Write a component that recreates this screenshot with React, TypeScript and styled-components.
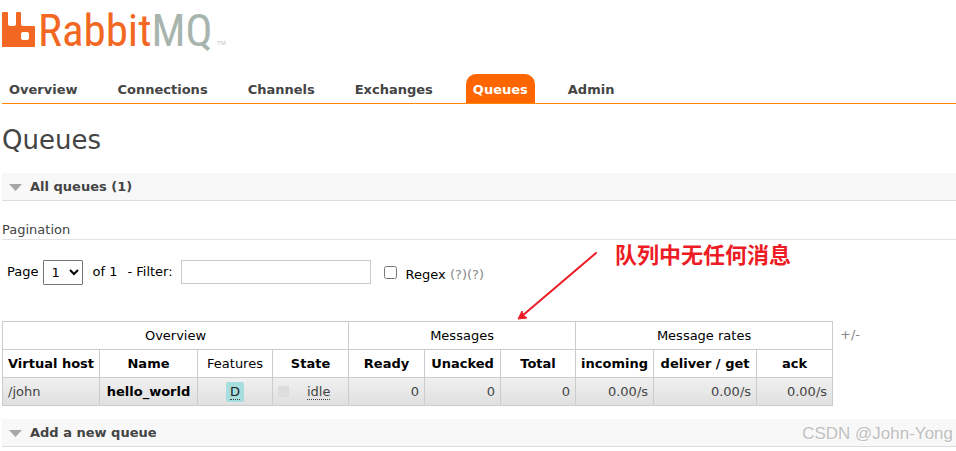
import React from "react";
import styled, { createGlobalStyle, css } from "styled-components";

const GlobalStyle = createGlobalStyle`
  * { box-sizing: border-box; }
  body {
    margin: 0;
    background: #fff;
    color: #444;
    font: 13px/16px Verdana, "DejaVu Sans", sans-serif;
  }
`;

const Page = styled.div`
  position: relative;
  padding: 0 0 4px 2px;
`;

const Logo = styled.a`
  display: block;
  height: 60px;
  svg { display: block; }
`;

const Wordmark = styled.text`
  font-family: "Roboto Condensed", Roboto, sans-serif;
  font-weight: 400;
  font-size: 45px;
`;

const Tabs = styled.nav`
  display: flex;
  gap: 26px;
  margin-top: 14px;
  border-bottom: 1px solid #f80;
`;

const Tab = styled.a<{ $active?: boolean }>`
  padding: 8px 7px 5px;
  border-radius: 10px 10px 0 0;
  font-weight: bold;
  text-decoration: none;
  white-space: nowrap;
  color: ${(p) => (p.$active ? "#fff" : "#444")};
  background: ${(p) => (p.$active ? "#f60" : "transparent")};
`;

const Title = styled.h1`
  margin: 20px 0 17px;
  font-size: 26px;
  line-height: 32px;
  font-weight: normal;
`;

const SectionHead = styled.h2`
  margin: 0;
  border-bottom: 1px solid #ddd;
  background: #f8f8f8;
`;

const Toggle = styled.button`
  display: flex;
  align-items: center;
  gap: 8px;
  width: 100%;
  padding: 6px 7px 5px;
  border: 0;
  background: none;
  color: #444;
  font: bold 13px/16px Verdana, "DejaVu Sans", sans-serif;
  text-align: left;
`;

const SubTitle = styled.h3`
  margin: 21px 0 0;
  padding-bottom: 1px;
  border-bottom: 1px solid #e4e4e4;
  font-size: 13px;
  font-weight: normal;
`;

const Filters = styled.form`
  display: flex;
  align-items: center;
  height: 26px;
  margin: 19px 0 36px 5px;
  color: #000;
`;

const Group = styled.div`
  display: flex;
  align-items: center;
`;

const PageSelect = styled.select`
  width: 40px;
  height: 25px;
  margin: 0 9px 0 5px;
  padding: 0 0 0 3px;
  border: 1px solid #767676;
  border-radius: 1px;
  background: #fff;
  color: #000;
  font: 13px/16px Verdana, "DejaVu Sans", sans-serif;
`;

const FilterLabel = styled.label`
  margin: 0 8px 0 10px;
`;

const FilterInput = styled.input`
  width: 190px;
  height: 24px;
  padding: 2px 4px;
  border: 1px solid #ccc;
  font: 13px/16px Verdana, "DejaVu Sans", sans-serif;
`;

const Check = styled.input`
  width: 13px;
  height: 13px;
  margin: 0 9px 0 13px;
`;

const RegexText = styled.div`
  padding-top: 6px;
`;

const Help = styled.a`
  color: #888;
  text-decoration: none;
`;

const TableRow = styled.div`
  display: flex;
  align-items: flex-start;
  gap: 7px;
  margin-bottom: 13px;
`;

const Table = styled.table`
  width: 831px;
  table-layout: fixed;
  border-collapse: collapse;
`;

const Col = styled.col<{ $w: number }>`
  width: ${(p) => p.$w}px;
`;

const cell = css`
  height: 28px;
  padding: 0 5px;
  border: 1px solid #ccc;
  white-space: nowrap;
`;

const Th = styled.th<{ $plain?: boolean }>`
  ${cell}
  padding: 0;
  color: #000;
  font-weight: ${(p) => (p.$plain ? "normal" : "bold")};
`;

const BodyRow = styled.tr`
  background: linear-gradient(#f0f0f0, #dfdfdf);
`;

const Td = styled.td<{ $align?: "left" | "center" | "right" }>`
  ${cell}
  text-align: ${(p) => p.$align ?? "left"};
`;

const QueueLink = styled.a`
  color: #000;
  font-weight: bold;
  text-decoration: none;
`;

const Abbr = styled.abbr`
  border-bottom: 1px dotted #444;
  text-decoration: none;
  line-height: 14px;
  display: inline-block;
`;

const Feature = styled.span`
  display: inline-block;
  padding: 3px 4px 2px;
  border-radius: 2px;
  background: #a6dedd;
  color: #222;
  line-height: 14px;
`;

const State = styled.div`
  display: flex;
  align-items: center;
`;

const StateBox = styled.span`
  width: 11px;
  height: 11px;
  background: #ddd;
`;

const StateText = styled.span`
  margin-left: 18px;
`;

const ColumnsLink = styled.a`
  margin-top: 6px;
  color: #888;
  text-decoration: none;
`;

const Arrow = styled.svg`
  position: absolute;
  left: 514px;
  top: 248px;
`;

const Note = styled.div`
  position: absolute;
  left: 615px;
  top: 239px;
  color: #ed1c24;
  font: bold 22px/28px "Noto Sans CJK SC", sans-serif;
  white-space: nowrap;
`;

const Watermark = styled.div`
  position: absolute;
  right: 3px;
  bottom: 7px;
  color: #c0c0c0;
  font: 17px/20px "Liberation Sans", Arial, sans-serif;
  text-shadow: 1px 1px 0 #fff;
  white-space: nowrap;
`;

const tabs = ["Overview", "Connections", "Channels", "Exchanges", "Queues", "Admin"];
const columns = [97, 98, 75, 76, 76, 76, 75, 78, 103, 76];

function Section({ children }: { children: React.ReactNode }) {
  return (
    <SectionHead>
      <Toggle type="button">
        <svg width="13" height="7" viewBox="0 0 13 7" aria-hidden="true">
          <path d="M0 0H13L6.5 7Z" fill="#a6a6a6" />
        </svg>
        {children}
      </Toggle>
    </SectionHead>
  );
}

export default function App() {
  return (
    <>
      <GlobalStyle />
      <Page>
        <header>
          <Logo href="#/" aria-label="RabbitMQ">
            <svg width="228" height="60" viewBox="0 -8 228 60">
              <path
                fill="#f26822"
                fillRule="evenodd"
                d="M1 4H5Q6 4 6 5V16Q6 18 8 18H12Q14 18 14 16V5Q14 4 15 4H18Q19 4 19 5V16Q19 18 21 18H32Q33 18 33 19V38Q33 39 32 39H0V5Q0 4 1 4ZM21 24Q19 24 19 26V30Q19 32 21 32H25Q27 32 27 30V26Q27 24 25 24Z"
              />
              <Wordmark x="36" y="38" fill="#f26822">
                Rabbit<tspan fill="#a8b5ae">MQ</tspan>
              </Wordmark>
              <text x="215" y="37" fill="#bbc4bf" fontFamily="Liberation Sans" fontSize="6">TM</text>
            </svg>
          </Logo>
          <Tabs>
            {tabs.map((t) => (
              <Tab key={t} href={"#/" + t.toLowerCase()} $active={t === "Queues"}>{t}</Tab>
            ))}
          </Tabs>
        </header>
        <main>
          <Title>Queues</Title>
          <Section>All queues (1)</Section>
          <SubTitle>Pagination</SubTitle>
          <Filters>
            <Group>
              <label htmlFor="page">Page</label>
              <PageSelect id="page" defaultValue="1">
                <option>1</option>
              </PageSelect>
              of 1
            </Group>
            <Group>
              <FilterLabel htmlFor="filter">- Filter:</FilterLabel>
              <FilterInput id="filter" type="text" />
            </Group>
            <Group>
              <Check id="regex" type="checkbox" />
              <RegexText>
                <label htmlFor="regex">Regex</label> <Help href="#regex">(?)</Help>
                <Help href="#filter-help">(?)</Help>
              </RegexText>
            </Group>
          </Filters>
          <TableRow>
            <Table>
              <colgroup>
                {columns.map((w, i) => <Col key={i} $w={w} />)}
              </colgroup>
              <thead>
                <tr>
                  <Th $plain colSpan={4}>Overview</Th>
                  <Th $plain colSpan={3}>Messages</Th>
                  <Th $plain colSpan={3}>Message rates</Th>
                </tr>
                <tr>
                  <Th>Virtual host</Th>
                  <Th>Name</Th>
                  <Th $plain>Features</Th>
                  <Th>State</Th>
                  <Th>Ready</Th>
                  <Th>Unacked</Th>
                  <Th>Total</Th>
                  <Th>incoming</Th>
                  <Th>deliver / get</Th>
                  <Th>ack</Th>
                </tr>
              </thead>
              <tbody>
                <BodyRow>
                  <Td>/john</Td>
                  <Td $align="center"><QueueLink href="#/queues/john/hello_world">hello_world</QueueLink></Td>
                  <Td $align="center"><Feature><Abbr title="durable: true">D</Abbr></Feature></Td>
                  <Td>
                    <State>
                      <StateBox />
                      <StateText><Abbr title="idle">idle</Abbr></StateText>
                    </State>
                  </Td>
                  <Td $align="right">0</Td>
                  <Td $align="right">0</Td>
                  <Td $align="right">0</Td>
                  <Td $align="right">0.00/s</Td>
                  <Td $align="right">0.00/s</Td>
                  <Td $align="right">0.00/s</Td>
                </BodyRow>
              </tbody>
            </Table>
            <ColumnsLink href="#columns">+/-</ColumnsLink>
          </TableRow>
          <Section>Add a new queue</Section>
        </main>
        <Arrow width="86" height="74" viewBox="0 0 86 74" aria-hidden="true">
          <path d="M82 5L8 68" stroke="#ed1c24" strokeWidth="2" strokeLinecap="round" />
          <path d="M4 71L8 63L9 67L13 70Z" fill="#ed1c24" stroke="#ed1c24" />
        </Arrow>
        <Note>队列中无任何消息</Note>
        <Watermark>CSDN @John-Yong</Watermark>
      </Page>
    </>
  );
}
